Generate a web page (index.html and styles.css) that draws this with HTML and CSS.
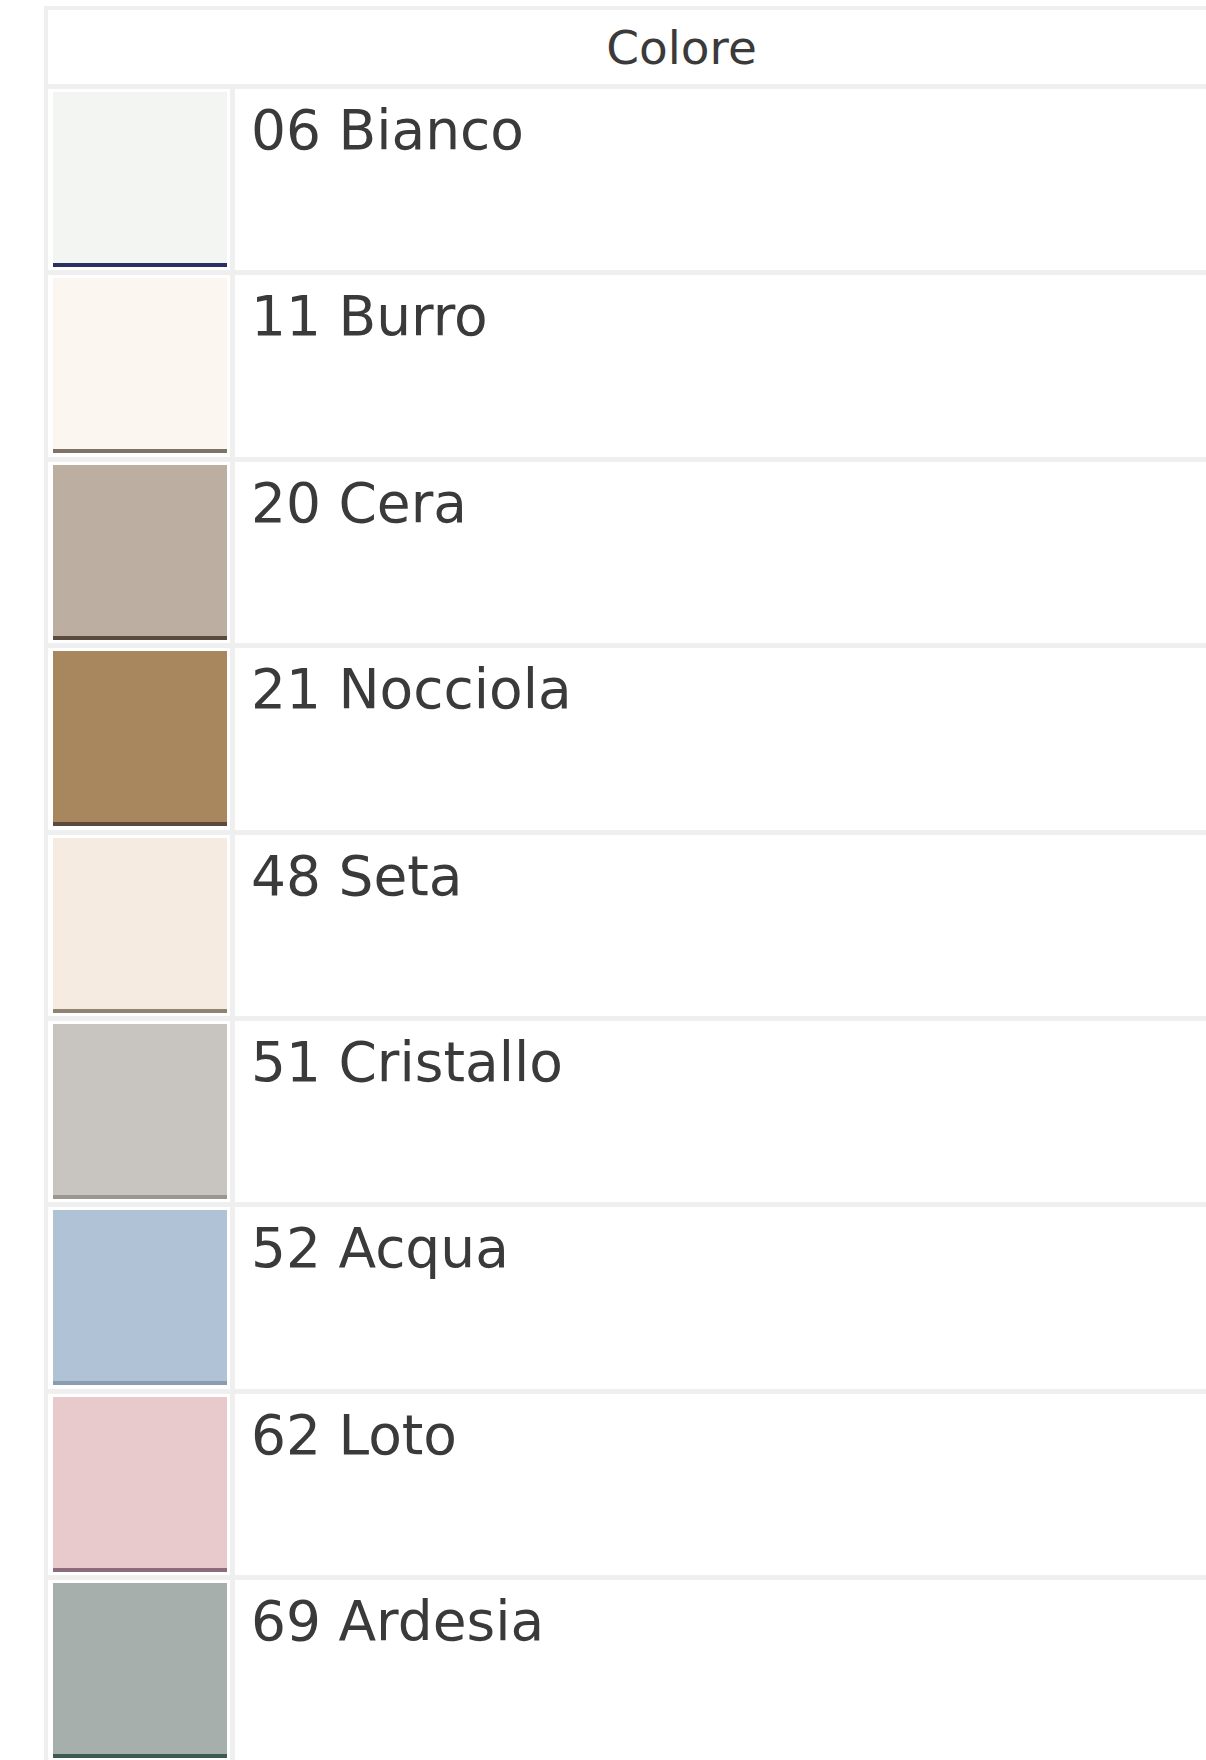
FILE: index.html
```html
<!DOCTYPE html>
<html lang="it">
<head>
<meta charset="utf-8">
<title>Colore</title>
<link rel="stylesheet" href="styles.css">
</head>
<body>
<div class="colors">
  <div class="head">Colore</div>

  <div class="sw-cell"><div class="swatch bianco"></div></div>
  <div class="name">06 Bianco</div>

  <div class="sw-cell"><div class="swatch burro"></div></div>
  <div class="name">11 Burro</div>

  <div class="sw-cell"><div class="swatch cera"></div></div>
  <div class="name">20 Cera</div>

  <div class="sw-cell"><div class="swatch nocciola"></div></div>
  <div class="name">21 Nocciola</div>

  <div class="sw-cell"><div class="swatch seta"></div></div>
  <div class="name">48 Seta</div>

  <div class="sw-cell"><div class="swatch cristallo"></div></div>
  <div class="name">51 Cristallo</div>

  <div class="sw-cell"><div class="swatch acqua"></div></div>
  <div class="name">52 Acqua</div>

  <div class="sw-cell"><div class="swatch loto"></div></div>
  <div class="name">62 Loto</div>

  <div class="sw-cell"><div class="swatch ardesia"></div></div>
  <div class="name">69 Ardesia</div>
</div>
</body>
</html>
```

FILE: styles.css
```css
html, body {
  margin: 0;
  padding: 0;
  background: #ffffff;
  overflow: hidden;
}

body {
  padding: 6px 0 0 44px;
  font-family: "DejaVu Sans", "Liberation Sans", sans-serif;
  color: #3a3a3a;
}

.colors {
  box-sizing: border-box;
  width: 1275px;
  display: grid;
  grid-template-columns: 182px 1fr;
  grid-template-rows: 74px;
  grid-auto-rows: 181.4px;
  gap: 5px;
  padding: 4px;
  background: #efeff0;
}

.head {
  grid-column: 1 / -1;
  background: #ffffff;
  display: flex;
  align-items: center;
  justify-content: center;
  font-size: 47px;
  line-height: 47px;
}

.sw-cell {
  background: #ffffff;
  padding: 3px 0 0 4.7px;
}

.swatch {
  box-sizing: border-box;
  width: 174.6px;
  height: 175px;
  border-bottom: 4.5px solid #283262;
}

.name {
  background: #ffffff;
  font-size: 55px;
  line-height: 64px;
  padding: 9px 0 0 16px;
}

.bianco    { background: #f3f5f3; border-bottom-color: #283262; }
.burro     { background: #fbf6ef; border-bottom-color: #7d7367; }
.cera      { background: #bcaea1; border-bottom-color: #5a4a3f; }
.nocciola  { background: #a8865e; border-bottom-color: #5d4a3e; }
.seta      { background: #f5ebe0; border-bottom-color: #8e8474; }
.cristallo { background: #c8c5c1; border-bottom-color: #9a9791; }
.acqua     { background: #b0c3d6; border-bottom-color: #8a9db0; }
.loto      { background: #e8c9cc; border-bottom-color: #8b6b7d; }
.ardesia   { background: #a6afac; border-bottom-color: #3d5a52; }
```
